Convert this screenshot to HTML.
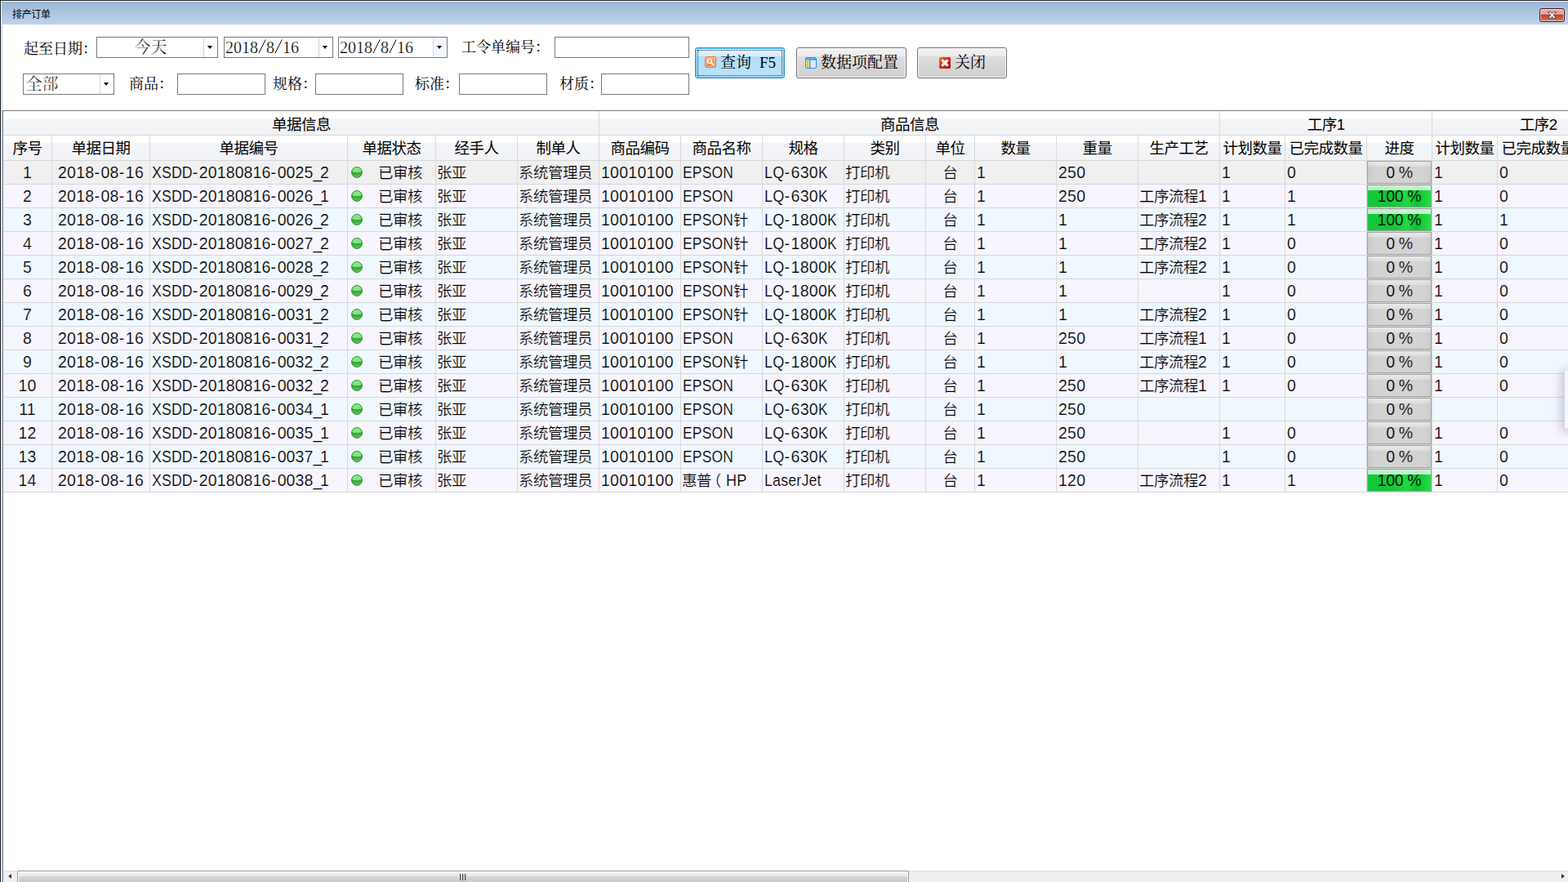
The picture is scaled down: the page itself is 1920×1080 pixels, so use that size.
<!DOCTYPE html>
<html lang="zh-CN"><head><meta charset="utf-8"><title>排产订单</title>
<style>
*{box-sizing:border-box;margin:0;padding:0}
html,body{width:1920px;height:1080px;overflow:hidden;background:#fff}
body{position:relative;font-family:"Liberation Sans","Noto Sans CJK SC",sans-serif;color:#000}
div{position:absolute}
.cj{display:inline-block;white-space:nowrap;font-family:"Liberation Sans","Noto Sans CJK SC",sans-serif;letter-spacing:-0.027em}
.lb .cj,.combo .cj,.btn .cj{font-family:"Liberation Serif","Noto Serif CJK SC",serif;letter-spacing:0}
/* window chrome */
.fr-t{left:0;top:0;width:1920px;height:1px;background:#1c1c1c}
.fr-t2{left:1px;top:1px;width:1919px;height:1px;background:#fdfdfd}
.fr-l{left:0;top:0;width:1px;height:1080px;background:#1c1c1c}
.fr-l2{left:1px;top:1px;width:1px;height:1079px;background:linear-gradient(#fff 0,#fff 30px,#e3f6fe 31px)}
.fr-l3{left:2px;top:30px;width:1px;height:1050px;background:#bbd6ef}
.tb{left:2px;top:2px;width:1918px;height:28px;background:linear-gradient(#9ab5d4,#bed4ec)}
.title{font-size:12px;line-height:14px;white-space:nowrap}
.xbtn{left:1885px;top:10px;width:31px;height:17px;border:1px solid #3e1020;border-radius:3px;
 background:linear-gradient(#eeb0a4 0,#e2978a 46%,#b93a1f 47%,#c9563f 70%,#d97a68 100%);
 box-shadow:inset 0 0 0 1px rgba(255,225,215,.75),0 0 0 1px rgba(190,225,250,.45)}
.xbtn svg{position:absolute;left:0;top:0}
/* filter panel */
.lb{font-size:18px;line-height:18px;white-space:nowrap;font-family:"Liberation Serif","Noto Serif CJK SC",serif}
.inp{border:1px solid #7a7a7a;background:#fff}
.combo{border:1px solid #7a7a7a;background:#fff;font-family:"Liberation Serif","Noto Serif CJK SC",serif;font-size:20px}
.combo .ct{left:1px;top:0;right:17px;height:24px;line-height:24px;white-space:nowrap}
.combo .ct.pl{padding-left:1.5px}
.combo .ct{-webkit-text-stroke:.25px #fff}
.combo .ct b{font-weight:normal;display:inline-block;width:10px;height:18px;vertical-align:-1px;color:transparent;-webkit-text-stroke:0;overflow:hidden;background:linear-gradient(to bottom right,transparent calc(50% - .65px),#1a1a1a calc(50% - .6px),#1a1a1a calc(50% + .6px),transparent calc(50% + .65px)) 1px 0/8.5px 17px no-repeat}
.combo .cb{right:0;top:0;width:17px;height:24px;border-left:1px solid #d4d4d4;background:#fff}
.combo .cb.hot{background:#f2f7fd}
.combo .cb i{position:absolute;left:4px;top:10px;width:0;height:0;border:3.5px solid transparent;border-top:4px solid #000;border-bottom:0}
.btn{border:1px solid #707070;border-radius:3px;
 background:linear-gradient(#f2f2f2 0,#ebebeb 27%,#dddddd 28%,#cfcfcf 100%);
 box-shadow:inset 0 0 0 1px rgba(255,255,255,.85);font-family:"Liberation Serif","Noto Serif CJK SC",serif;font-size:19px}
.btn.def{border-color:#3c8fd0;background:linear-gradient(#e3f3fd 0,#d6ecfb 27%,#b3defa 28%,#b9e3fb 100%);
 box-shadow:inset 0 0 0 1px #52c6f3}
.btn .bi{width:14px;height:14px}
.btn .bi svg{display:block}
.btn .bt{top:8px;height:20px;line-height:20px;white-space:nowrap}
.btn .sp{display:inline-block;width:10px}
.btn .focus{left:2px;top:2px;right:2px;bottom:2px;border:1px dotted #222}
/* grid */
.grid{left:3px;top:135px;width:1917px;height:945px;border-left:1px solid #7d7d7d;border-top:1px solid #7a7a7a;background:#fff;overflow:hidden}
.gi{left:-4px;top:-136px;width:1920px;height:1080px}
.hd{font-size:18.5px;line-height:29px;padding:1.5px 0 0 1px;text-align:center;white-space:nowrap;overflow:hidden;
 background:linear-gradient(#fff 0,#fff 33%,#f4f5f8 34%,#f2f3f7 100%)}
.hd.h2{line-height:30px;padding:1px 0 0 0;background:linear-gradient(#fff 0,#fff 30%,#f4f5f8 31%,#f2f3f7 100%)}
.hs{left:4px;width:1916px;height:1px;background:#d7d7d7}
.vs{width:1px;background:#d9d9d9}
.row{left:4px;width:1916px;height:28px}
.row.sel{background:#f0f0f0}
.row.ev{background:#f7f5fd}
.row.od{background:#f0f8ff}
.ce{top:0;height:28px;line-height:28px;font-size:19.5px;letter-spacing:.25px;white-space:nowrap;overflow:hidden}
.ce .cj{font-size:18.5px}
.ce.c{text-align:center}
.ce.l{padding-left:2px}
.ce.st .dot{position:absolute;left:4px;top:7px;width:14px;height:14px;border-radius:50%;border:1px solid #27962a;
 background:radial-gradient(ellipse 135% 100% at 50% -12%,#8ff08f 0,#7cdf7d 64%,rgba(124,223,125,0) 67%),linear-gradient(#3a9e3a 0,#379a37 50%,#5ec65e 100%);
 box-shadow:0 0 0 1px rgba(255,245,255,.55)}
.ce.st .stt{position:absolute;left:21px;right:0;text-align:center}
.pb{left:0;top:0;right:0;bottom:0;text-align:center;letter-spacing:-.3px;border:1px solid #a3a3a3;
 background:linear-gradient(to right,rgba(0,0,0,.04),rgba(0,0,0,0) 12%,rgba(0,0,0,0) 88%,rgba(0,0,0,.04)),linear-gradient(#e9e9e9 0,#dedede 22%,#d3d3d3 23%,#d3d3d3 100%);line-height:26px}
.pb.p100{border-color:#9c9c9c;background:linear-gradient(rgba(255,255,255,.75) 0,rgba(255,255,255,.72) 22%,rgba(255,255,255,0) 23%),linear-gradient(to right,#13c93a 0,#10c636 35%,#1fd943 62%,#0fc033 78%,#24e047 100%)}
.ce .u{display:inline-block;transform-origin:0 50%}
.ce .f{letter-spacing:1.6px}.ce .k{letter-spacing:-2.4px}
.u0{transform:scaleX(0.910);margin-right:-4.97px}.u1{transform:scaleX(0.892);margin-right:-7.52px}.u2{transform:scaleX(0.924);margin-right:-2.01px}.u3{transform:scaleX(0.875);margin-right:-1.66px}.u4{transform:scaleX(0.924);margin-right:-2.09px}.u5{transform:scaleX(0.908);margin-right:-7.08px}
.ce.bn{letter-spacing:.12px}
.ce.l>.cj:first-child{margin-left:-1px}
.row.sel .ce{-webkit-text-stroke:.2px #f0f0f0}.row.ev .ce{-webkit-text-stroke:.2px #f7f5fd}.row.od .ce{-webkit-text-stroke:.2px #f0f8ff}
.row .ce .pb{-webkit-text-stroke:.2px #d3d3d3}.row .ce .pb.p100{-webkit-text-stroke:.2px #16cc3b}
/* scrollbar */
.sb{left:4px;top:1066px;width:1916px;height:14px;background:#efefef;border-top:1px solid #e2e2e2}
.th{left:21px;top:1066px;width:1092px;height:17px;border:1px solid #979797;border-radius:2px;
 background:linear-gradient(#f3f3f3 0,#e9e9ea 38%,#d6d6da 39%,#c6c6cb 100%);box-shadow:inset 0 0 0 1px #fff}
.ar{width:0;height:0;border:3.5px solid transparent}
.pop{left:1916px;top:453px;width:20px;height:72px;background:#f4f8fe;border-radius:3px;box-shadow:-3px 2px 12px 2px rgba(80,60,110,.24)}
</style></head><body>
<div class="fr-t"></div><div class="fr-t2"></div><div class="fr-l"></div><div class="fr-l2"></div><div class="fr-l3"></div>
<div class="tb"></div>
<div class="title" style="left:15px;top:11.3px"><span class="cj">排产订单</span></div>
<div class="xbtn"><svg width="29" height="15" viewBox="0 0 29 15"><path d="M9.6 3.6h3.3l1.6 2.1 1.6-2.1h3.3l-3.2 3.9 3.3 4h-3.3l-1.7-2.2-1.7 2.2h-3.3l3.3-4z" fill="#fcfcfc" stroke="#434e60" stroke-width="1" stroke-linejoin="round"/></svg></div>
<div class="lb" style="left:29px;top:51px"><span class="cj">起至日期：</span></div>
<div class="combo" style="left:118px;top:45px;width:149px;height:26px;"><div class="ct" style="text-align:center"><span class="cj">今天</span></div><div class="cb"><i></i></div></div>
<div class="combo" style="left:274px;top:45px;width:134px;height:26px;"><div class="ct" style="text-align:left">2018<b>/</b>8<b>/</b>16</div><div class="cb"><i></i></div></div>
<div class="combo" style="left:414px;top:45px;width:134px;height:26px;"><div class="ct" style="text-align:left">2018<b>/</b>8<b>/</b>16</div><div class="cb hot"><i></i></div></div>
<div class="lb" style="left:565px;top:49px"><span class="cj">工令单编号：</span></div>
<div class="inp" style="left:679px;top:45px;width:165px;height:26px;"></div>
<div class="combo" style="left:28px;top:90px;width:112px;height:26px;"><div class="ct pl" style="text-align:left"><span class="cj">全部</span></div><div class="cb"><i></i></div></div>
<div class="lb" style="left:158px;top:94px"><span class="cj">商品：</span></div>
<div class="inp" style="left:217px;top:90px;width:108px;height:26px;"></div>
<div class="lb" style="left:334px;top:94px"><span class="cj">规格：</span></div>
<div class="inp" style="left:386px;top:90px;width:108px;height:26px;"></div>
<div class="lb" style="left:508px;top:94px"><span class="cj">标准：</span></div>
<div class="inp" style="left:562px;top:90px;width:108px;height:26px;"></div>
<div class="lb" style="left:685px;top:94px"><span class="cj">材质：</span></div>
<div class="inp" style="left:736px;top:90px;width:108px;height:26px;"></div>
<div class="btn def" style="left:851px;top:58px;width:110px;height:38px;"><div class="bi" style="left:11px;top:10px"><svg class="ic" width="14" height="14" viewBox="0 0 14 14"><defs><linearGradient id="og" x1="0" y1="0" x2="0" y2="1"><stop offset="0" stop-color="#fab07d"/><stop offset="1" stop-color="#ec7a3a"/></linearGradient></defs><rect x=".5" y=".5" width="13" height="13" rx="2" fill="url(#og)" stroke="#e0702f"/><rect x="1.5" y="1.5" width="11" height="11" rx="1" fill="none" stroke="#fdd0ad" stroke-opacity=".8"/><circle cx="5.9" cy="5.9" r="2.5" fill="#f59a5f" stroke="#fff" stroke-width="1.4"/><path d="M8.2 8.2l2.3 2.3" stroke="#fff" stroke-width="2" stroke-linecap="round"/></svg></div><div class="bt" style="left:30px"><span class="cj">查询</span><span class="sp">&nbsp;</span>F5</div><div class="focus"></div></div>
<div class="btn " style="left:975px;top:58px;width:135px;height:38px;"><div class="bi" style="left:10px;top:11px"><svg class="ic" width="14" height="14" viewBox="0 0 14 14"><rect x=".5" y=".5" width="13" height="13" rx="1.6" fill="#e5e3ff" stroke="#0a96ff"/><rect x="1" y="1" width="12" height="2.6" fill="#0a96ff"/><rect x="1.6" y="1.4" width="10.8" height=".8" fill="#a5d5ff"/><rect x="1" y="3.6" width="4" height="9.4" fill="#fdf27a"/><rect x="5" y="3" width="1.3" height="10.5" fill="#0a96ff"/><circle cx="3" cy="5.4" r=".95" fill="#ff5a0a"/><circle cx="3" cy="8.4" r=".95" fill="#ff5a0a"/><circle cx="3" cy="11.4" r=".95" fill="#ff5a0a"/></svg></div><div class="bt" style="left:29px"><span class="cj">数据项配置</span></div></div>
<div class="btn " style="left:1123px;top:58px;width:110px;height:38px;"><div class="bi" style="left:26px;top:11px"><svg class="ic" width="14" height="14" viewBox="0 0 14 14"><defs><linearGradient id="rg" x1="0" y1="0" x2="1" y2="1"><stop offset="0" stop-color="#ff6a30"/><stop offset=".35" stop-color="#ee3208"/><stop offset="1" stop-color="#ae0400"/></linearGradient></defs><rect x="0" y="0" width="14" height="14" rx="2" fill="url(#rg)"/><path d="M2.3 4.4L4.4 2.3 7 4.6 9.6 2.3 11.7 4.4 9.4 7 11.7 9.6 9.6 11.7 7 9.4 4.4 11.7 2.3 9.6 4.6 7z" fill="#f6f8f9"/></svg></div><div class="bt" style="left:45px"><span class="cj">关闭</span></div></div>
<div class="grid"><div class="gi">
<div class="hd" style="left:4px;top:136px;width:729px;height:29px"><span class="cj">单据信息</span></div>
<div class="vs" style="left:733px;top:136px;height:30px"></div>
<div class="hd" style="left:734px;top:136px;width:759px;height:29px"><span class="cj">商品信息</span></div>
<div class="vs" style="left:1493px;top:136px;height:30px"></div>
<div class="hd" style="left:1494px;top:136px;width:259px;height:29px"><span class="cj">工序</span>1</div>
<div class="vs" style="left:1753px;top:136px;height:30px"></div>
<div class="hd" style="left:1754px;top:136px;width:259px;height:29px"><span class="cj">工序</span>2</div>
<div class="vs" style="left:2013px;top:136px;height:30px"></div>
<div class="hs" style="top:165px"></div>
<div class="hd h2" style="left:4px;top:166px;width:59px;height:30px"><span class="cj">序号</span></div>
<div class="vs" style="left:63px;top:166px;height:31px"></div>
<div class="hd h2" style="left:64px;top:166px;width:119px;height:30px"><span class="cj">单据日期</span></div>
<div class="vs" style="left:183px;top:166px;height:31px"></div>
<div class="hd h2" style="left:184px;top:166px;width:241px;height:30px"><span class="cj">单据编号</span></div>
<div class="vs" style="left:425px;top:166px;height:31px"></div>
<div class="hd h2" style="left:426px;top:166px;width:107px;height:30px"><span class="cj">单据状态</span></div>
<div class="vs" style="left:533px;top:166px;height:31px"></div>
<div class="hd h2" style="left:534px;top:166px;width:99px;height:30px"><span class="cj">经手人</span></div>
<div class="vs" style="left:633px;top:166px;height:31px"></div>
<div class="hd h2" style="left:634px;top:166px;width:99px;height:30px"><span class="cj">制单人</span></div>
<div class="vs" style="left:733px;top:166px;height:31px"></div>
<div class="hd h2" style="left:734px;top:166px;width:99px;height:30px"><span class="cj">商品编码</span></div>
<div class="vs" style="left:833px;top:166px;height:31px"></div>
<div class="hd h2" style="left:834px;top:166px;width:99px;height:30px"><span class="cj">商品名称</span></div>
<div class="vs" style="left:933px;top:166px;height:31px"></div>
<div class="hd h2" style="left:934px;top:166px;width:99px;height:30px"><span class="cj">规格</span></div>
<div class="vs" style="left:1033px;top:166px;height:31px"></div>
<div class="hd h2" style="left:1034px;top:166px;width:99px;height:30px"><span class="cj">类别</span></div>
<div class="vs" style="left:1133px;top:166px;height:31px"></div>
<div class="hd h2" style="left:1134px;top:166px;width:59px;height:30px"><span class="cj">单位</span></div>
<div class="vs" style="left:1193px;top:166px;height:31px"></div>
<div class="hd h2" style="left:1194px;top:166px;width:99px;height:30px"><span class="cj">数量</span></div>
<div class="vs" style="left:1293px;top:166px;height:31px"></div>
<div class="hd h2" style="left:1294px;top:166px;width:99px;height:30px"><span class="cj">重量</span></div>
<div class="vs" style="left:1393px;top:166px;height:31px"></div>
<div class="hd h2" style="left:1394px;top:166px;width:99px;height:30px"><span class="cj">生产工艺</span></div>
<div class="vs" style="left:1493px;top:166px;height:31px"></div>
<div class="hd h2" style="left:1494px;top:166px;width:79px;height:30px"><span class="cj">计划数量</span></div>
<div class="vs" style="left:1573px;top:166px;height:31px"></div>
<div class="hd h2" style="left:1574px;top:166px;width:99px;height:30px"><span class="cj">已完成数量</span></div>
<div class="vs" style="left:1673px;top:166px;height:31px"></div>
<div class="hd h2" style="left:1674px;top:166px;width:79px;height:30px"><span class="cj">进度</span></div>
<div class="vs" style="left:1753px;top:166px;height:31px"></div>
<div class="hd h2" style="left:1754px;top:166px;width:79px;height:30px"><span class="cj">计划数量</span></div>
<div class="vs" style="left:1833px;top:166px;height:31px"></div>
<div class="hd h2" style="left:1834px;top:166px;width:99px;height:30px"><span class="cj">已完成数量</span></div>
<div class="vs" style="left:1933px;top:166px;height:31px"></div>
<div class="hs" style="top:196px"></div>
<div class="row sel" style="top:197px"><div class="ce c" style="left:0px;width:59px">1</div><div class="ce c dt" style="left:60px;width:119px">2018<span class="f">-</span>08<span class="f">-</span>16</div><div class="ce l bn" style="left:180px;width:241px"><span class="u u0">XSDD</span><span class="f">-</span>20180816<span class="f">-</span>0025<span class="k">_</span>2</div><div class="ce st" style="left:422px;width:107px"><i class="dot"></i><span class="stt"><span class="cj">已审核</span></span></div><div class="ce l" style="left:530px;width:99px"><span class="cj">张亚</span></div><div class="ce l" style="left:630px;width:99px"><span class="cj">系统管理员</span></div><div class="ce l cd" style="left:730px;width:99px">10010100</div><div class="ce l nm" style="left:830px;width:99px"><span class="u u1">EPSON</span></div><div class="ce l sp" style="left:930px;width:99px"><span class="u u2">LQ</span><span class="f">-</span>630<span class="u u3">K</span></div><div class="ce l" style="left:1030px;width:99px"><span class="cj">打印机</span></div><div class="ce c" style="left:1130px;width:59px"><span class="cj">台</span></div><div class="ce l" style="left:1190px;width:99px">1</div><div class="ce l" style="left:1290px;width:99px">250</div><div class="ce l" style="left:1390px;width:99px"></div><div class="ce l" style="left:1490px;width:79px">1</div><div class="ce l" style="left:1570px;width:99px">0</div><div class="ce pg" style="left:1670px;width:79px"><div class="pb p0">0 %</div></div><div class="ce l" style="left:1750px;width:79px">1</div><div class="ce l" style="left:1830px;width:99px">0</div></div>
<div class="hs" style="top:225px"></div>
<div class="row ev" style="top:226px"><div class="ce c" style="left:0px;width:59px">2</div><div class="ce c dt" style="left:60px;width:119px">2018<span class="f">-</span>08<span class="f">-</span>16</div><div class="ce l bn" style="left:180px;width:241px"><span class="u u0">XSDD</span><span class="f">-</span>20180816<span class="f">-</span>0026<span class="k">_</span>1</div><div class="ce st" style="left:422px;width:107px"><i class="dot"></i><span class="stt"><span class="cj">已审核</span></span></div><div class="ce l" style="left:530px;width:99px"><span class="cj">张亚</span></div><div class="ce l" style="left:630px;width:99px"><span class="cj">系统管理员</span></div><div class="ce l cd" style="left:730px;width:99px">10010100</div><div class="ce l nm" style="left:830px;width:99px"><span class="u u1">EPSON</span></div><div class="ce l sp" style="left:930px;width:99px"><span class="u u2">LQ</span><span class="f">-</span>630<span class="u u3">K</span></div><div class="ce l" style="left:1030px;width:99px"><span class="cj">打印机</span></div><div class="ce c" style="left:1130px;width:59px"><span class="cj">台</span></div><div class="ce l" style="left:1190px;width:99px">1</div><div class="ce l" style="left:1290px;width:99px">250</div><div class="ce l" style="left:1390px;width:99px"><span class="cj">工序流程</span>1</div><div class="ce l" style="left:1490px;width:79px">1</div><div class="ce l" style="left:1570px;width:99px">1</div><div class="ce pg" style="left:1670px;width:79px"><div class="pb p100">100 %</div></div><div class="ce l" style="left:1750px;width:79px">1</div><div class="ce l" style="left:1830px;width:99px">0</div></div>
<div class="hs" style="top:254px"></div>
<div class="row od" style="top:255px"><div class="ce c" style="left:0px;width:59px">3</div><div class="ce c dt" style="left:60px;width:119px">2018<span class="f">-</span>08<span class="f">-</span>16</div><div class="ce l bn" style="left:180px;width:241px"><span class="u u0">XSDD</span><span class="f">-</span>20180816<span class="f">-</span>0026<span class="k">_</span>2</div><div class="ce st" style="left:422px;width:107px"><i class="dot"></i><span class="stt"><span class="cj">已审核</span></span></div><div class="ce l" style="left:530px;width:99px"><span class="cj">张亚</span></div><div class="ce l" style="left:630px;width:99px"><span class="cj">系统管理员</span></div><div class="ce l cd" style="left:730px;width:99px">10010100</div><div class="ce l nm" style="left:830px;width:99px"><span class="u u1">EPSON</span><span class="cj">针</span></div><div class="ce l sp" style="left:930px;width:99px"><span class="u u2">LQ</span><span class="f">-</span>1800<span class="u u3">K</span></div><div class="ce l" style="left:1030px;width:99px"><span class="cj">打印机</span></div><div class="ce c" style="left:1130px;width:59px"><span class="cj">台</span></div><div class="ce l" style="left:1190px;width:99px">1</div><div class="ce l" style="left:1290px;width:99px">1</div><div class="ce l" style="left:1390px;width:99px"><span class="cj">工序流程</span>2</div><div class="ce l" style="left:1490px;width:79px">1</div><div class="ce l" style="left:1570px;width:99px">1</div><div class="ce pg" style="left:1670px;width:79px"><div class="pb p100">100 %</div></div><div class="ce l" style="left:1750px;width:79px">1</div><div class="ce l" style="left:1830px;width:99px">1</div></div>
<div class="hs" style="top:283px"></div>
<div class="row ev" style="top:284px"><div class="ce c" style="left:0px;width:59px">4</div><div class="ce c dt" style="left:60px;width:119px">2018<span class="f">-</span>08<span class="f">-</span>16</div><div class="ce l bn" style="left:180px;width:241px"><span class="u u0">XSDD</span><span class="f">-</span>20180816<span class="f">-</span>0027<span class="k">_</span>2</div><div class="ce st" style="left:422px;width:107px"><i class="dot"></i><span class="stt"><span class="cj">已审核</span></span></div><div class="ce l" style="left:530px;width:99px"><span class="cj">张亚</span></div><div class="ce l" style="left:630px;width:99px"><span class="cj">系统管理员</span></div><div class="ce l cd" style="left:730px;width:99px">10010100</div><div class="ce l nm" style="left:830px;width:99px"><span class="u u1">EPSON</span><span class="cj">针</span></div><div class="ce l sp" style="left:930px;width:99px"><span class="u u2">LQ</span><span class="f">-</span>1800<span class="u u3">K</span></div><div class="ce l" style="left:1030px;width:99px"><span class="cj">打印机</span></div><div class="ce c" style="left:1130px;width:59px"><span class="cj">台</span></div><div class="ce l" style="left:1190px;width:99px">1</div><div class="ce l" style="left:1290px;width:99px">1</div><div class="ce l" style="left:1390px;width:99px"><span class="cj">工序流程</span>2</div><div class="ce l" style="left:1490px;width:79px">1</div><div class="ce l" style="left:1570px;width:99px">0</div><div class="ce pg" style="left:1670px;width:79px"><div class="pb p0">0 %</div></div><div class="ce l" style="left:1750px;width:79px">1</div><div class="ce l" style="left:1830px;width:99px">0</div></div>
<div class="hs" style="top:312px"></div>
<div class="row od" style="top:313px"><div class="ce c" style="left:0px;width:59px">5</div><div class="ce c dt" style="left:60px;width:119px">2018<span class="f">-</span>08<span class="f">-</span>16</div><div class="ce l bn" style="left:180px;width:241px"><span class="u u0">XSDD</span><span class="f">-</span>20180816<span class="f">-</span>0028<span class="k">_</span>2</div><div class="ce st" style="left:422px;width:107px"><i class="dot"></i><span class="stt"><span class="cj">已审核</span></span></div><div class="ce l" style="left:530px;width:99px"><span class="cj">张亚</span></div><div class="ce l" style="left:630px;width:99px"><span class="cj">系统管理员</span></div><div class="ce l cd" style="left:730px;width:99px">10010100</div><div class="ce l nm" style="left:830px;width:99px"><span class="u u1">EPSON</span><span class="cj">针</span></div><div class="ce l sp" style="left:930px;width:99px"><span class="u u2">LQ</span><span class="f">-</span>1800<span class="u u3">K</span></div><div class="ce l" style="left:1030px;width:99px"><span class="cj">打印机</span></div><div class="ce c" style="left:1130px;width:59px"><span class="cj">台</span></div><div class="ce l" style="left:1190px;width:99px">1</div><div class="ce l" style="left:1290px;width:99px">1</div><div class="ce l" style="left:1390px;width:99px"><span class="cj">工序流程</span>2</div><div class="ce l" style="left:1490px;width:79px">1</div><div class="ce l" style="left:1570px;width:99px">0</div><div class="ce pg" style="left:1670px;width:79px"><div class="pb p0">0 %</div></div><div class="ce l" style="left:1750px;width:79px">1</div><div class="ce l" style="left:1830px;width:99px">0</div></div>
<div class="hs" style="top:341px"></div>
<div class="row ev" style="top:342px"><div class="ce c" style="left:0px;width:59px">6</div><div class="ce c dt" style="left:60px;width:119px">2018<span class="f">-</span>08<span class="f">-</span>16</div><div class="ce l bn" style="left:180px;width:241px"><span class="u u0">XSDD</span><span class="f">-</span>20180816<span class="f">-</span>0029<span class="k">_</span>2</div><div class="ce st" style="left:422px;width:107px"><i class="dot"></i><span class="stt"><span class="cj">已审核</span></span></div><div class="ce l" style="left:530px;width:99px"><span class="cj">张亚</span></div><div class="ce l" style="left:630px;width:99px"><span class="cj">系统管理员</span></div><div class="ce l cd" style="left:730px;width:99px">10010100</div><div class="ce l nm" style="left:830px;width:99px"><span class="u u1">EPSON</span><span class="cj">针</span></div><div class="ce l sp" style="left:930px;width:99px"><span class="u u2">LQ</span><span class="f">-</span>1800<span class="u u3">K</span></div><div class="ce l" style="left:1030px;width:99px"><span class="cj">打印机</span></div><div class="ce c" style="left:1130px;width:59px"><span class="cj">台</span></div><div class="ce l" style="left:1190px;width:99px">1</div><div class="ce l" style="left:1290px;width:99px">1</div><div class="ce l" style="left:1390px;width:99px"></div><div class="ce l" style="left:1490px;width:79px">1</div><div class="ce l" style="left:1570px;width:99px">0</div><div class="ce pg" style="left:1670px;width:79px"><div class="pb p0">0 %</div></div><div class="ce l" style="left:1750px;width:79px">1</div><div class="ce l" style="left:1830px;width:99px">0</div></div>
<div class="hs" style="top:370px"></div>
<div class="row od" style="top:371px"><div class="ce c" style="left:0px;width:59px">7</div><div class="ce c dt" style="left:60px;width:119px">2018<span class="f">-</span>08<span class="f">-</span>16</div><div class="ce l bn" style="left:180px;width:241px"><span class="u u0">XSDD</span><span class="f">-</span>20180816<span class="f">-</span>0031<span class="k">_</span>2</div><div class="ce st" style="left:422px;width:107px"><i class="dot"></i><span class="stt"><span class="cj">已审核</span></span></div><div class="ce l" style="left:530px;width:99px"><span class="cj">张亚</span></div><div class="ce l" style="left:630px;width:99px"><span class="cj">系统管理员</span></div><div class="ce l cd" style="left:730px;width:99px">10010100</div><div class="ce l nm" style="left:830px;width:99px"><span class="u u1">EPSON</span><span class="cj">针</span></div><div class="ce l sp" style="left:930px;width:99px"><span class="u u2">LQ</span><span class="f">-</span>1800<span class="u u3">K</span></div><div class="ce l" style="left:1030px;width:99px"><span class="cj">打印机</span></div><div class="ce c" style="left:1130px;width:59px"><span class="cj">台</span></div><div class="ce l" style="left:1190px;width:99px">1</div><div class="ce l" style="left:1290px;width:99px">1</div><div class="ce l" style="left:1390px;width:99px"><span class="cj">工序流程</span>2</div><div class="ce l" style="left:1490px;width:79px">1</div><div class="ce l" style="left:1570px;width:99px">0</div><div class="ce pg" style="left:1670px;width:79px"><div class="pb p0">0 %</div></div><div class="ce l" style="left:1750px;width:79px">1</div><div class="ce l" style="left:1830px;width:99px">0</div></div>
<div class="hs" style="top:399px"></div>
<div class="row ev" style="top:400px"><div class="ce c" style="left:0px;width:59px">8</div><div class="ce c dt" style="left:60px;width:119px">2018<span class="f">-</span>08<span class="f">-</span>16</div><div class="ce l bn" style="left:180px;width:241px"><span class="u u0">XSDD</span><span class="f">-</span>20180816<span class="f">-</span>0031<span class="k">_</span>2</div><div class="ce st" style="left:422px;width:107px"><i class="dot"></i><span class="stt"><span class="cj">已审核</span></span></div><div class="ce l" style="left:530px;width:99px"><span class="cj">张亚</span></div><div class="ce l" style="left:630px;width:99px"><span class="cj">系统管理员</span></div><div class="ce l cd" style="left:730px;width:99px">10010100</div><div class="ce l nm" style="left:830px;width:99px"><span class="u u1">EPSON</span></div><div class="ce l sp" style="left:930px;width:99px"><span class="u u2">LQ</span><span class="f">-</span>630<span class="u u3">K</span></div><div class="ce l" style="left:1030px;width:99px"><span class="cj">打印机</span></div><div class="ce c" style="left:1130px;width:59px"><span class="cj">台</span></div><div class="ce l" style="left:1190px;width:99px">1</div><div class="ce l" style="left:1290px;width:99px">250</div><div class="ce l" style="left:1390px;width:99px"><span class="cj">工序流程</span>1</div><div class="ce l" style="left:1490px;width:79px">1</div><div class="ce l" style="left:1570px;width:99px">0</div><div class="ce pg" style="left:1670px;width:79px"><div class="pb p0">0 %</div></div><div class="ce l" style="left:1750px;width:79px">1</div><div class="ce l" style="left:1830px;width:99px">0</div></div>
<div class="hs" style="top:428px"></div>
<div class="row od" style="top:429px"><div class="ce c" style="left:0px;width:59px">9</div><div class="ce c dt" style="left:60px;width:119px">2018<span class="f">-</span>08<span class="f">-</span>16</div><div class="ce l bn" style="left:180px;width:241px"><span class="u u0">XSDD</span><span class="f">-</span>20180816<span class="f">-</span>0032<span class="k">_</span>2</div><div class="ce st" style="left:422px;width:107px"><i class="dot"></i><span class="stt"><span class="cj">已审核</span></span></div><div class="ce l" style="left:530px;width:99px"><span class="cj">张亚</span></div><div class="ce l" style="left:630px;width:99px"><span class="cj">系统管理员</span></div><div class="ce l cd" style="left:730px;width:99px">10010100</div><div class="ce l nm" style="left:830px;width:99px"><span class="u u1">EPSON</span><span class="cj">针</span></div><div class="ce l sp" style="left:930px;width:99px"><span class="u u2">LQ</span><span class="f">-</span>1800<span class="u u3">K</span></div><div class="ce l" style="left:1030px;width:99px"><span class="cj">打印机</span></div><div class="ce c" style="left:1130px;width:59px"><span class="cj">台</span></div><div class="ce l" style="left:1190px;width:99px">1</div><div class="ce l" style="left:1290px;width:99px">1</div><div class="ce l" style="left:1390px;width:99px"><span class="cj">工序流程</span>2</div><div class="ce l" style="left:1490px;width:79px">1</div><div class="ce l" style="left:1570px;width:99px">0</div><div class="ce pg" style="left:1670px;width:79px"><div class="pb p0">0 %</div></div><div class="ce l" style="left:1750px;width:79px">1</div><div class="ce l" style="left:1830px;width:99px">0</div></div>
<div class="hs" style="top:457px"></div>
<div class="row ev" style="top:458px"><div class="ce c" style="left:0px;width:59px">10</div><div class="ce c dt" style="left:60px;width:119px">2018<span class="f">-</span>08<span class="f">-</span>16</div><div class="ce l bn" style="left:180px;width:241px"><span class="u u0">XSDD</span><span class="f">-</span>20180816<span class="f">-</span>0032<span class="k">_</span>2</div><div class="ce st" style="left:422px;width:107px"><i class="dot"></i><span class="stt"><span class="cj">已审核</span></span></div><div class="ce l" style="left:530px;width:99px"><span class="cj">张亚</span></div><div class="ce l" style="left:630px;width:99px"><span class="cj">系统管理员</span></div><div class="ce l cd" style="left:730px;width:99px">10010100</div><div class="ce l nm" style="left:830px;width:99px"><span class="u u1">EPSON</span></div><div class="ce l sp" style="left:930px;width:99px"><span class="u u2">LQ</span><span class="f">-</span>630<span class="u u3">K</span></div><div class="ce l" style="left:1030px;width:99px"><span class="cj">打印机</span></div><div class="ce c" style="left:1130px;width:59px"><span class="cj">台</span></div><div class="ce l" style="left:1190px;width:99px">1</div><div class="ce l" style="left:1290px;width:99px">250</div><div class="ce l" style="left:1390px;width:99px"><span class="cj">工序流程</span>1</div><div class="ce l" style="left:1490px;width:79px">1</div><div class="ce l" style="left:1570px;width:99px">0</div><div class="ce pg" style="left:1670px;width:79px"><div class="pb p0">0 %</div></div><div class="ce l" style="left:1750px;width:79px">1</div><div class="ce l" style="left:1830px;width:99px">0</div></div>
<div class="hs" style="top:486px"></div>
<div class="row od" style="top:487px"><div class="ce c" style="left:0px;width:59px">11</div><div class="ce c dt" style="left:60px;width:119px">2018<span class="f">-</span>08<span class="f">-</span>16</div><div class="ce l bn" style="left:180px;width:241px"><span class="u u0">XSDD</span><span class="f">-</span>20180816<span class="f">-</span>0034<span class="k">_</span>1</div><div class="ce st" style="left:422px;width:107px"><i class="dot"></i><span class="stt"><span class="cj">已审核</span></span></div><div class="ce l" style="left:530px;width:99px"><span class="cj">张亚</span></div><div class="ce l" style="left:630px;width:99px"><span class="cj">系统管理员</span></div><div class="ce l cd" style="left:730px;width:99px">10010100</div><div class="ce l nm" style="left:830px;width:99px"><span class="u u1">EPSON</span></div><div class="ce l sp" style="left:930px;width:99px"><span class="u u2">LQ</span><span class="f">-</span>630<span class="u u3">K</span></div><div class="ce l" style="left:1030px;width:99px"><span class="cj">打印机</span></div><div class="ce c" style="left:1130px;width:59px"><span class="cj">台</span></div><div class="ce l" style="left:1190px;width:99px">1</div><div class="ce l" style="left:1290px;width:99px">250</div><div class="ce l" style="left:1390px;width:99px"></div><div class="ce l" style="left:1490px;width:79px"></div><div class="ce l" style="left:1570px;width:99px"></div><div class="ce pg" style="left:1670px;width:79px"><div class="pb p0">0 %</div></div><div class="ce l" style="left:1750px;width:79px"></div><div class="ce l" style="left:1830px;width:99px"></div></div>
<div class="hs" style="top:515px"></div>
<div class="row ev" style="top:516px"><div class="ce c" style="left:0px;width:59px">12</div><div class="ce c dt" style="left:60px;width:119px">2018<span class="f">-</span>08<span class="f">-</span>16</div><div class="ce l bn" style="left:180px;width:241px"><span class="u u0">XSDD</span><span class="f">-</span>20180816<span class="f">-</span>0035<span class="k">_</span>1</div><div class="ce st" style="left:422px;width:107px"><i class="dot"></i><span class="stt"><span class="cj">已审核</span></span></div><div class="ce l" style="left:530px;width:99px"><span class="cj">张亚</span></div><div class="ce l" style="left:630px;width:99px"><span class="cj">系统管理员</span></div><div class="ce l cd" style="left:730px;width:99px">10010100</div><div class="ce l nm" style="left:830px;width:99px"><span class="u u1">EPSON</span></div><div class="ce l sp" style="left:930px;width:99px"><span class="u u2">LQ</span><span class="f">-</span>630<span class="u u3">K</span></div><div class="ce l" style="left:1030px;width:99px"><span class="cj">打印机</span></div><div class="ce c" style="left:1130px;width:59px"><span class="cj">台</span></div><div class="ce l" style="left:1190px;width:99px">1</div><div class="ce l" style="left:1290px;width:99px">250</div><div class="ce l" style="left:1390px;width:99px"></div><div class="ce l" style="left:1490px;width:79px">1</div><div class="ce l" style="left:1570px;width:99px">0</div><div class="ce pg" style="left:1670px;width:79px"><div class="pb p0">0 %</div></div><div class="ce l" style="left:1750px;width:79px">1</div><div class="ce l" style="left:1830px;width:99px">0</div></div>
<div class="hs" style="top:544px"></div>
<div class="row od" style="top:545px"><div class="ce c" style="left:0px;width:59px">13</div><div class="ce c dt" style="left:60px;width:119px">2018<span class="f">-</span>08<span class="f">-</span>16</div><div class="ce l bn" style="left:180px;width:241px"><span class="u u0">XSDD</span><span class="f">-</span>20180816<span class="f">-</span>0037<span class="k">_</span>1</div><div class="ce st" style="left:422px;width:107px"><i class="dot"></i><span class="stt"><span class="cj">已审核</span></span></div><div class="ce l" style="left:530px;width:99px"><span class="cj">张亚</span></div><div class="ce l" style="left:630px;width:99px"><span class="cj">系统管理员</span></div><div class="ce l cd" style="left:730px;width:99px">10010100</div><div class="ce l nm" style="left:830px;width:99px"><span class="u u1">EPSON</span></div><div class="ce l sp" style="left:930px;width:99px"><span class="u u2">LQ</span><span class="f">-</span>630<span class="u u3">K</span></div><div class="ce l" style="left:1030px;width:99px"><span class="cj">打印机</span></div><div class="ce c" style="left:1130px;width:59px"><span class="cj">台</span></div><div class="ce l" style="left:1190px;width:99px">1</div><div class="ce l" style="left:1290px;width:99px">250</div><div class="ce l" style="left:1390px;width:99px"></div><div class="ce l" style="left:1490px;width:79px">1</div><div class="ce l" style="left:1570px;width:99px">0</div><div class="ce pg" style="left:1670px;width:79px"><div class="pb p0">0 %</div></div><div class="ce l" style="left:1750px;width:79px">1</div><div class="ce l" style="left:1830px;width:99px">0</div></div>
<div class="hs" style="top:573px"></div>
<div class="row ev" style="top:574px"><div class="ce c" style="left:0px;width:59px">14</div><div class="ce c dt" style="left:60px;width:119px">2018<span class="f">-</span>08<span class="f">-</span>16</div><div class="ce l bn" style="left:180px;width:241px"><span class="u u0">XSDD</span><span class="f">-</span>20180816<span class="f">-</span>0038<span class="k">_</span>1</div><div class="ce st" style="left:422px;width:107px"><i class="dot"></i><span class="stt"><span class="cj">已审核</span></span></div><div class="ce l" style="left:530px;width:99px"><span class="cj">张亚</span></div><div class="ce l" style="left:630px;width:99px"><span class="cj">系统管理员</span></div><div class="ce l cd" style="left:730px;width:99px">10010100</div><div class="ce l nm" style="left:830px;width:99px"><span class="cj">惠普<span style="margin-left:-.34em;margin-right:.34em">（</span></span><span class="u u4">HP</span></div><div class="ce l sp" style="left:930px;width:99px"><span class="u u5">LaserJet</span></div><div class="ce l" style="left:1030px;width:99px"><span class="cj">打印机</span></div><div class="ce c" style="left:1130px;width:59px"><span class="cj">台</span></div><div class="ce l" style="left:1190px;width:99px">1</div><div class="ce l" style="left:1290px;width:99px">120</div><div class="ce l" style="left:1390px;width:99px"><span class="cj">工序流程</span>2</div><div class="ce l" style="left:1490px;width:79px">1</div><div class="ce l" style="left:1570px;width:99px">1</div><div class="ce pg" style="left:1670px;width:79px"><div class="pb p100">100 %</div></div><div class="ce l" style="left:1750px;width:79px">1</div><div class="ce l" style="left:1830px;width:99px">0</div></div>
<div class="hs" style="top:602px"></div>
<div class="vs" style="left:63px;top:197px;height:406px"></div>
<div class="vs" style="left:183px;top:197px;height:406px"></div>
<div class="vs" style="left:425px;top:197px;height:406px"></div>
<div class="vs" style="left:533px;top:197px;height:406px"></div>
<div class="vs" style="left:633px;top:197px;height:406px"></div>
<div class="vs" style="left:733px;top:197px;height:406px"></div>
<div class="vs" style="left:833px;top:197px;height:406px"></div>
<div class="vs" style="left:933px;top:197px;height:406px"></div>
<div class="vs" style="left:1033px;top:197px;height:406px"></div>
<div class="vs" style="left:1133px;top:197px;height:406px"></div>
<div class="vs" style="left:1193px;top:197px;height:406px"></div>
<div class="vs" style="left:1293px;top:197px;height:406px"></div>
<div class="vs" style="left:1393px;top:197px;height:406px"></div>
<div class="vs" style="left:1493px;top:197px;height:406px"></div>
<div class="vs" style="left:1573px;top:197px;height:406px"></div>
<div class="vs" style="left:1673px;top:197px;height:406px"></div>
<div class="vs" style="left:1753px;top:197px;height:406px"></div>
<div class="vs" style="left:1833px;top:197px;height:406px"></div>
<div class="vs" style="left:1933px;top:197px;height:406px"></div>
</div></div>
<div class="pop"></div>
<div class="sb"></div>
<div class="ar" style="left:10px;top:1070px;border-right:4px solid #3c3c3c;border-left:0"></div>
<div class="ar" style="left:1912px;top:1070px;border-left:4px solid #3c3c3c;border-right:0"></div>
<div class="th"></div>
<svg style="position:absolute;left:562px;top:1070px" width="9" height="8" viewBox="0 0 9 8"><path d="M1.5 0v8M4.5 0v8M7.5 0v8" stroke="#444" stroke-width="1.4"/><path d="M.5 0v8M3.5 0v8M6.5 0v8" stroke="#fff" stroke-width=".8" opacity=".8"/></svg>
</body></html>
